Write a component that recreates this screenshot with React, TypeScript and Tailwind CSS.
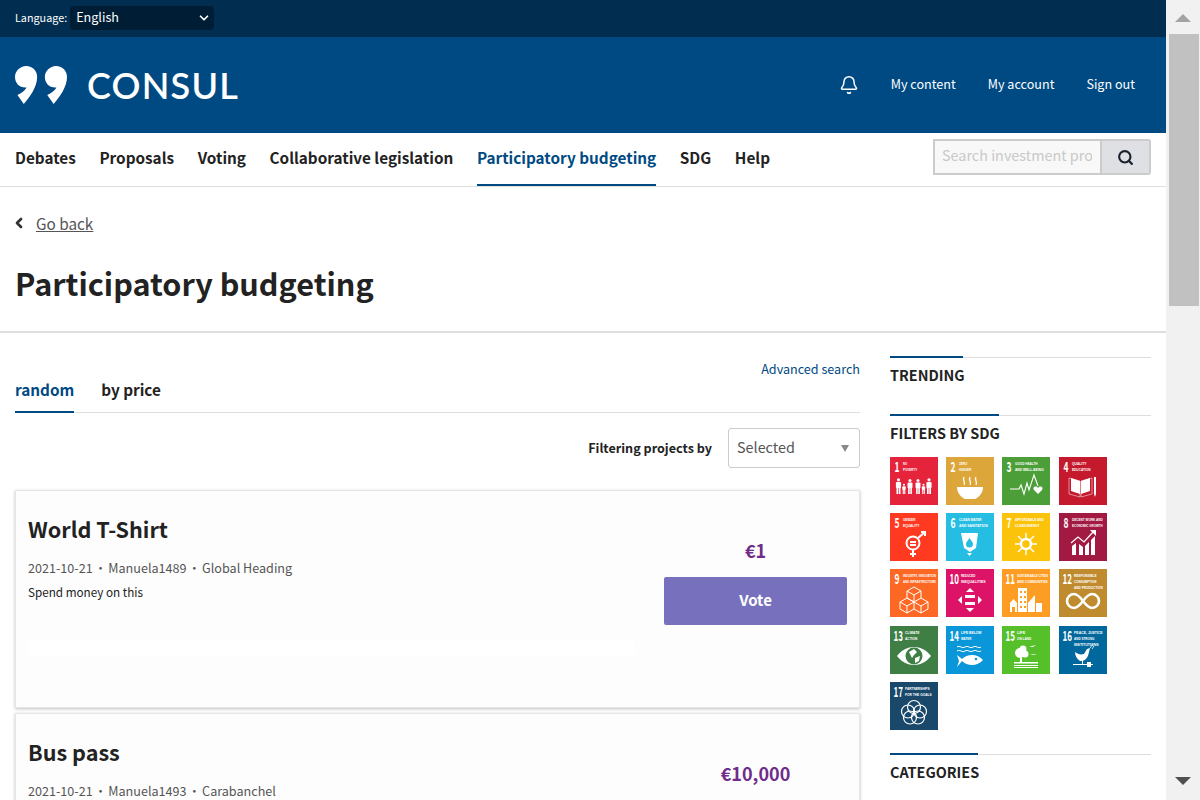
// participatory budgeting page
import type { ReactNode } from "react";
import { Bell, ChevronDown, ChevronLeft, Search } from "lucide-react";

const W = "#fff";

function Person({ x, s }: { x: number; s: number }) {
  return (
    <g fill={W}>
      <circle cx={x} cy={37 - 14.2 * s} r={1.6 * s} />
      <rect x={x - 2.6 * s} y={37 - 12 * s} width={5.2 * s} height={6 * s} rx={1} />
      <rect x={x - 2 * s} y={37 - 7 * s} width={1.7 * s} height={7 * s} />
      <rect x={x + 0.3 * s} y={37 - 7 * s} width={1.7 * s} height={7 * s} />
    </g>
  );
}

const tiles: { n: number; bg: string; lines: string[]; art: ReactNode }[] = [
  {
    n: 1,
    bg: "#e5243b",
    lines: ["NO", "POVERTY"],
    art: (
      <g>
        <Person x={8.5} s={1} />
        <Person x={14} s={0.65} />
        <Person x={20} s={0.95} />
        <Person x={28} s={0.95} />
        <Person x={33.5} s={0.65} />
        <Person x={39} s={1} />
      </g>
    ),
  },
  {
    n: 2,
    bg: "#dda63a",
    lines: ["ZERO", "HUNGER"],
    art: (
      <g>
        <path d="M11 30h26c0 6-4 10-8 12H19c-4-2-8-6-8-12z" fill={W} />
        <path d="M18 20c-2 3 2 5 0 8M24 20c-2 3 2 5 0 8M30 20c-2 3 2 5 0 8" stroke={W} strokeWidth="1.3" fill="none" />
      </g>
    ),
  },
  {
    n: 3,
    bg: "#4c9f38",
    lines: ["GOOD HEALTH", "AND WELL-BEING"],
    art: (
      <g>
        <path d="M8 32h9l2-4 3 9 3-11 2 7 5-15 4 11" stroke={W} strokeWidth="1.1" fill="none" />
        <path d="M36 37l-4-4c-2-3 2-5 4-2 2-3 6-1 4 2z" fill={W} />
      </g>
    ),
  },
  {
    n: 4,
    bg: "#c5192d",
    lines: ["QUALITY", "EDUCATION"],
    art: (
      <g fill={W}>
        <path d="M10 21v16l11 3V24zM33 21v16l-11 3V24z" stroke={W} strokeWidth="0.5" fill="none" />
        <path d="M12 21l9 3v13l-9-3zM31 21l-9 3v13l9-3z" />
        <rect x="35" y="20" width="2" height="17" />
        <path d="M35 37h2l-1 3z" />
      </g>
    ),
  },
  {
    n: 5,
    bg: "#ff3a21",
    lines: ["GENDER", "EQUALITY"],
    art: (
      <g stroke={W} fill="none" strokeWidth="2">
        <circle cx="23" cy="30" r="6.5" />
        <path d="M28 25l7-6M31 19h4v4M23 37v7M20 41h6M20 29h6M20 32h6" />
      </g>
    ),
  },
  {
    n: 6,
    bg: "#26bde2",
    lines: ["CLEAN WATER", "AND SANITATION"],
    art: (
      <g>
        <path d="M15 20h17l-2 15-6 4-6-4z" fill={W} />
        <path d="M23.5 25c2 3 3.5 4 3.5 6a3.5 3.5 0 0 1-7 0c0-2 1.5-3 3.5-6z" fill="#26bde2" />
        <path d="M21 40h5l-2.5 3z" fill={W} />
      </g>
    ),
  },
  {
    n: 7,
    bg: "#fcc30b",
    lines: ["AFFORDABLE AND", "CLEAN ENERGY"],
    art: (
      <g stroke={W} fill="none">
        <circle cx="24" cy="31" r="5" strokeWidth="2.5" />
        <path d="M24 20v5M24 37v5M13 31h5M30 31h5M16 23l4 4M28 35l4 4M32 23l-4 4M20 35l-4 4" strokeWidth="1.4" />
      </g>
    ),
  },
  {
    n: 8,
    bg: "#a21942",
    lines: ["DECENT WORK AND", "ECONOMIC GROWTH"],
    art: (
      <g fill={W}>
        <path d="M13 42V33l4-3v12zM20 42V31l4 3v8zM26 42V33l4-4v13zM32 42V27l4-4v19z" />
        <path d="M12 30l7-6 6 5 9-10" stroke={W} strokeWidth="1.2" fill="none" />
        <path d="M31 17h6v6z" />
      </g>
    ),
  },
  {
    n: 9,
    bg: "#fd6925",
    lines: ["INDUSTRY, INNOVATION", "AND INFRASTRUCTURE"],
    art: (
      <g stroke={W} strokeWidth="1" fill="none">
        <path d="M24 18l7 4v7l-7 4-7-4v-7zM17 22l7 4 7-4M24 26v7" />
        <path d="M17 29l7 4v7l-7 4-7-4v-7zM10 33l7 4 7-4M17 37v7" />
        <path d="M31 29l7 4v7l-7 4-7-4M24 33l7 4 7-4M31 37v7" />
      </g>
    ),
  },
  {
    n: 10,
    bg: "#dd1367",
    lines: ["REDUCED", "INEQUALITIES"],
    art: (
      <g fill={W}>
        <path d="M24 19l4 4h-8zM24 43l4-4h-8zM12 31l4-4v8zM36 31l-4-4v8z" />
        <rect x="19" y="26" width="10" height="3" />
        <rect x="19" y="33" width="10" height="3" />
      </g>
    ),
  },
  {
    n: 11,
    bg: "#fd9d24",
    lines: ["SUSTAINABLE CITIES", "AND COMMUNITIES"],
    art: (
      <g fill={W}>
        <rect x="16" y="19" width="9" height="24" />
        <path d="M8 43v-9l3.5-4 3.5 4v9zM26 43V34l7-8v17zM34 43v-9h6v9z" />
        <path d="M18 22h2v2h-2zM22 22h2v2h-2zM18 27h2v2h-2zM22 27h2v2h-2zM18 32h2v2h-2zM22 32h2v2h-2zM18 37h2v2h-2zM22 37h2v2h-2zM10 38h3v5h-3z" fill="#fd9d24" />
      </g>
    ),
  },
  {
    n: 12,
    bg: "#bf8b2e",
    lines: ["RESPONSIBLE", "CONSUMPTION", "AND PRODUCTION"],
    art: (
      <path
        d="M24 32c-3-4-6-7-9-7a7 7 0 0 0 0 14c3 0 6-3 9-7s6-7 9-7a7 7 0 0 1 0 14c-3 0-6-3-9-7z"
        stroke={W}
        strokeWidth="2.6"
        fill="none"
      />
    ),
  },
  {
    n: 13,
    bg: "#3f7e44",
    lines: ["CLIMATE", "ACTION"],
    art: (
      <g>
        <path d="M7 30c9-12 25-12 34 0-9 12-25 12-34 0z" fill={W} />
        <circle cx="24" cy="30" r="8.5" fill="#3f7e44" />
        <path d="M19 26l5-3 3 3-3 3-2 3zM25 32l5-2-1 5-4 2z" fill={W} />
      </g>
    ),
  },
  {
    n: 14,
    bg: "#0a97d9",
    lines: ["LIFE BELOW", "WATER"],
    art: (
      <g>
        <path d="M11 21c3-2 5 2 8 0s5 2 8 0 5 2 8 0M11 25c3-2 5 2 8 0s5 2 8 0 5 2 8 0" stroke={W} fill="none" />
        <path d="M11 29l5 4c5-5 15-6 21 1-6 7-16 6-21 1l-5 6 2-6z" fill={W} />
        <circle cx="30" cy="33" r="1.3" fill="#0a97d9" />
      </g>
    ),
  },
  {
    n: 15,
    bg: "#56c02b",
    lines: ["LIFE", "ON LAND"],
    art: (
      <g fill={W}>
        <circle cx="18" cy="27" r="5" />
        <circle cx="21" cy="23" r="3.5" />
        <circle cx="23" cy="28" r="3.5" />
        <rect x="18" y="30" width="2" height="6" />
        <rect x="12" y="36" width="24" height="1.5" />
        <rect x="12" y="39" width="24" height="1" />
        <rect x="12" y="41" width="24" height="1" />
        <path d="M27 21l3-1 4-1-3 2zM28 29l4-1 3 0-4 1z" />
      </g>
    ),
  },
  {
    n: 16,
    bg: "#00689d",
    lines: ["PEACE, JUSTICE", "AND STRONG", "INSTITUTIONS"],
    art: (
      <g fill={W}>
        <path d="M16 26c3 2 5 3 9 2l3-5 3-1-1 4c-1 6-4 9-8 9h-1c-3-2-5-5-5-9z" />
        <path d="M31 22l3-4M33 23l2-3" stroke={W} strokeWidth="0.8" />
        <rect x="14" y="38" width="20" height="1" />
        <rect x="28" y="36" width="4" height="5" />
        <rect x="23" y="34" width="1" height="5" />
      </g>
    ),
  },
  {
    n: 17,
    bg: "#19486a",
    lines: ["PARTNERSHIPS", "FOR THE GOALS"],
    art: (
      <g stroke={W} strokeWidth="1.2" fill="none">
        <circle cx="24" cy="25" r="6.5" />
        <circle cx="18" cy="29.5" r="6.5" />
        <circle cx="30" cy="29.5" r="6.5" />
        <circle cx="20" cy="35.5" r="6.5" />
        <circle cx="28" cy="35.5" r="6.5" />
      </g>
    ),
  },
];

function SdgTile({ n, bg, lines, art }: (typeof tiles)[number]) {
  const labelX = n > 9 ? 15 : 13;
  return (
    <svg width="48" height="48" viewBox="0 0 48 48" style={{ background: bg }}>
      <text
        x={n > 9 ? 3.5 : 4.5}
        y="14.5"
        fill={W}
        fontSize="14"
        fontWeight="700"
        textLength={n > 9 ? 9.5 : 5}
        lengthAdjust="spacingAndGlyphs"
        fontFamily="'Noto Sans CJK SC', sans-serif"
      >
        {n}
      </text>
      {lines.map((l, i) => (
        <text
          key={l}
          x={labelX}
          y={7.5 + i * 6}
          fill={W}
          fontSize="3.8"
          fontWeight="700"
          textLength={Math.min(l.length * 2.05, 46 - labelX)}
          lengthAdjust="spacingAndGlyphs"
          fontFamily="'Liberation Sans', sans-serif"
        >
          {l}
        </text>
      ))}
      {art}
    </svg>
  );
}

function SideHeading({ title, bar }: { title: string; bar: string }) {
  return (
    <div className="border-t border-[#dedede] relative">
      <div className={`absolute -top-[2px] left-0 h-[2px] bg-[#004a83] ${bar}`}></div>
      <h2 className="mt-[7px] text-[14.4px] leading-[20px] font-bold text-[#222]">{title}</h2>
    </div>
  );
}

function Meta({ who, where }: { who: string; where: string }) {
  return (
    <p className="text-[12.6px] leading-[20px] text-[#555]">
      2021-10-21<span className="mx-[1.5px]">•</span>
      {who}
      <span className="mx-[1.5px]">•</span>
      {where}
    </p>
  );
}

export default function App() {
  return (
    <div className="h-screen overflow-hidden flex bg-white text-[#222] [font-family:'Noto_Sans_CJK_SC','Source_Sans_Pro',sans-serif]">
      <div className="w-[1166px] shrink-0">
        <div className="h-[37px] bg-[#002d50] flex items-center px-[15px]">
          <span className="text-[10.8px] leading-[16px] text-white mt-[-3px]">Language:</span>
          <div className="ml-[3px] w-[144px] h-[24px] rounded-[4px] bg-[#001d36] flex items-center justify-between pl-[6px] pr-[3px] text-white text-[12.6px] mt-[-1px]">
            <span className="mt-[-1px]">English</span>
            <ChevronDown size={14} strokeWidth={3} />
          </div>
        </div>

        <header className="h-[96px] bg-[#004a83] flex items-center justify-between px-[15px] text-white">
          <div className="flex items-center">
            <svg width="52" height="38" viewBox="0 0 49.3 38" preserveAspectRatio="none" fill="#fff" className="mt-[-1px]">
              <path d="M10.5 0C17 0 21 5 21 11 21 21 14 31 8.3 38L2.3 29C6 27 9.5 25 11 21.5 4 22 0 17 0 11 0 5 5 0 10.5 0Z" />
              <path d="M38.8 0C45.3 0 49.3 5 49.3 11 49.3 21 42.3 31 36.6 38L30.6 29C34.3 27 37.8 25 39.3 21.5 32.3 22 28.3 17 28.3 11 28.3 5 33.3 0 38.8 0Z" />
            </svg>
            <span className="ml-[20px] text-[36px] leading-[40px] font-semibold tracking-[1.2px] [font-family:Lato,sans-serif]">
              CONSUL
            </span>
          </div>
          <nav className="flex items-center text-[12.6px] leading-[20px] mr-[16px]">
            <Bell size={20} strokeWidth={1.8} className="mr-[32px]" />
            <span className="mt-[-2px]">My content</span>
            <span className="ml-[32px] mt-[-2px]">My account</span>
            <span className="ml-[32px] mt-[-2px]">Sign out</span>
          </nav>
        </header>

        <div className="h-[54px] border-b border-[#dedede] flex justify-between px-[15px]">
          <nav className="flex gap-[23.6px] text-[15.3px] font-bold text-[#222]">
            <span className="leading-[48px]">Debates</span>
            <span className="leading-[48px]">Proposals</span>
            <span className="leading-[48px]">Voting</span>
            <span className="leading-[48px]">Collaborative legislation</span>
            <span className="leading-[48px] h-[53px] border-b-2 border-[#004a83] text-[#004a83]">Participatory budgeting</span>
            <span className="leading-[48px]">SDG</span>
            <span className="leading-[48px]">Help</span>
          </nav>
          <div className="mt-[6px] flex h-[36px]">
            <div className="w-[169px] border-2 border-[#ccc] bg-[#f8f8f8] pl-[7px] pr-[8px] text-[14.4px] leading-[27px] text-[#c9c9c9] overflow-hidden whitespace-nowrap">
              <span className="block overflow-hidden">Search investment projects</span>
            </div>
            <div className="w-[49px] bg-[#dee0e3] border-2 border-l-0 border-[#ccc] rounded-r-[3px] flex items-center justify-center">
              <Search size={17} strokeWidth={3} className="text-[#1a2230]" />
            </div>
          </div>
        </div>

        <div className="h-[146px] border-b-2 border-[#dedede] px-[15px]">
          <div className="pt-[24px] flex items-center text-[#555]">
            <ChevronLeft size={16} strokeWidth={4} className="text-[#333] ml-[-4px]" />
            <span className="ml-[9px] text-[15.3px] leading-[24px] underline">Go back</span>
          </div>
          <h1 className="mt-[24px] text-[30.6px] leading-[48px] font-bold text-[#222]">Participatory budgeting</h1>
        </div>

        <div className="flex px-[15px]">
          <main className="w-[845px] shrink-0">
            <div className="mt-[24px] h-[56px] border-b border-[#dedede] relative flex gap-[27px] text-[15.3px] font-bold">
              <span className="mt-[19px] h-[37px] leading-[27px] border-b-2 border-[#004a83] text-[#004a83]">random</span>
              <span className="mt-[19px] leading-[27px]">by price</span>
              <a className="absolute right-0 top-[2px] text-[12.6px] leading-[20px] font-normal text-[#004a83]">Advanced search</a>
            </div>
            <div className="mt-[15px] flex items-center justify-end">
              <span className="text-[12.6px] font-bold">Filtering projects by</span>
              <div className="ml-[16px] w-[132px] h-[40px] border border-[#ccc] rounded-[3px] flex items-center justify-between pl-[8px] pr-[10px] text-[14.4px] text-[#555]">
                <span className="mt-[-2px]">Selected</span>
                <span className="w-0 h-0 border-x-[4px] border-x-transparent border-t-[7px] border-t-[#888]"></span>
              </div>
            </div>

            <article className="mt-[22px] h-[218px] border border-[#e6e6e6] bg-[#fdfdfd] shadow-[0_1px_3px_rgba(0,0,0,0.25)] flex pl-[12px] pr-[12px]">
              <div className="flex-1 pt-[19px]">
                <h3 className="text-[21.6px] leading-[38px] font-bold text-[#222]">World T-Shirt</h3>
                <div className="mt-[10px]"><Meta who="Manuela1489" where="Global Heading" /></div>
                <p className="mt-[4px] text-[11.7px] leading-[20px]">Spend money on this</p>
                <div className="mt-[37px] w-[607px] h-[16px] bg-white"></div>
              </div>
              <div className="w-[183px] shrink-0 flex flex-col items-center pt-[45px]">
                <p className="text-[18px] leading-[28px] font-bold text-[#6f2c8a]">€1</p>
                <button className="mt-[13px] w-[183px] h-[48px] pb-[2px] rounded-[2px] bg-[#7771bd] text-white text-[15px] font-bold">Vote</button>
              </div>
            </article>

            <article className="mt-[5px] h-[218px] border border-[#e6e6e6] bg-[#fdfdfd] shadow-[0_1px_3px_rgba(0,0,0,0.25)] flex pl-[12px] pr-[12px]">
              <div className="flex-1 pt-[19px]">
                <h3 className="text-[21.6px] leading-[38px] font-bold text-[#222]">Bus pass</h3>
                <div className="mt-[10px]"><Meta who="Manuela1493" where="Carabanchel" /></div>
              </div>
              <div className="w-[183px] shrink-0 flex flex-col items-center pt-[45px]">
                <p className="text-[18px] leading-[28px] font-bold text-[#6f2c8a]">€10,000</p>
              </div>
            </article>
          </main>

          <aside className="ml-[30px] w-[261px] pt-[24px]">
            <SideHeading title="TRENDING" bar="w-[73px]" />
            <div className="mt-[30px]"><SideHeading title="FILTERS BY SDG" bar="w-[109px]" /></div>
            <div className="mt-[14px] grid grid-cols-[repeat(4,48px)] gap-x-[8.2px] gap-y-[8.2px]">
              {tiles.map((t) => (
                <SdgTile key={t.n} {...t} />
              ))}
            </div>
            <div className="mt-[24px]"><SideHeading title="CATEGORIES" bar="w-[88px]" /></div>
          </aside>
        </div>
      </div>

      <div className="w-[34px] shrink-0 bg-[#f1f1f1] flex flex-col items-center relative">
        <span className="mt-[14px] w-0 h-0 border-x-[8px] border-x-transparent border-b-[8px] border-b-[#a3a3a3]"></span>
        <div className="mt-[12px] ml-[2px] w-[30px] h-[272px] bg-[#c1c1c1]"></div>
        <span className="absolute bottom-[15px] w-0 h-0 border-x-[8px] border-x-transparent border-t-[8px] border-t-[#505050]"></span>
      </div>
    </div>
  );
}
